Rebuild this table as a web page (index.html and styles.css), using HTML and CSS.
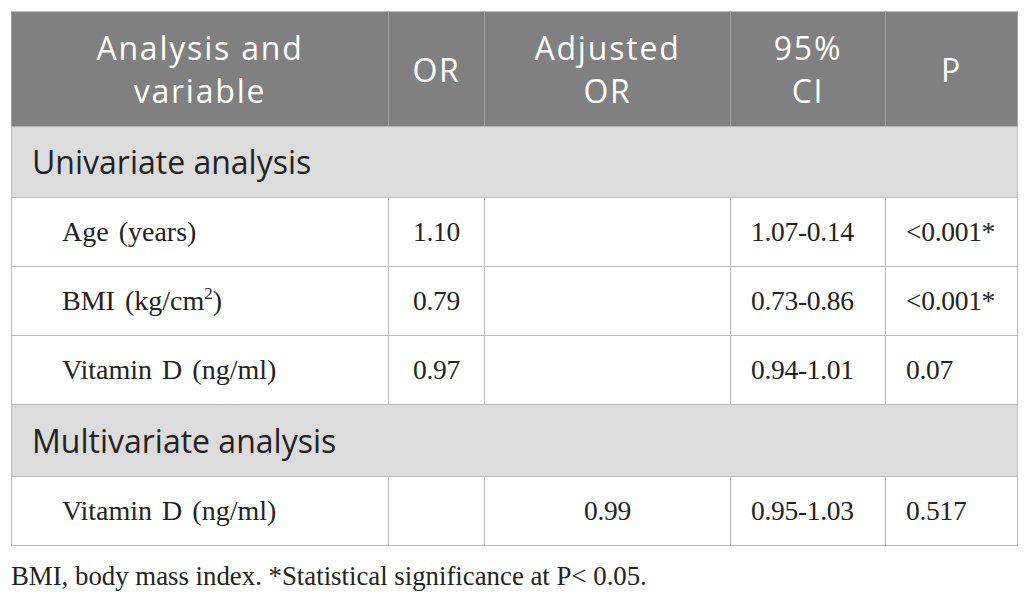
FILE: index.html
```html
<!DOCTYPE html>
<html>
<head>
<meta charset="utf-8">
<link rel="stylesheet" href="styles.css">
</head>
<body>
<div class="page">
  <table class="stats">
    <colgroup>
      <col class="c-var">
      <col class="c-or">
      <col class="c-adj">
      <col class="c-ci">
      <col class="c-p">
    </colgroup>
    <thead>
      <tr class="head">
        <th>Analysis and<br>variable</th>
        <th>OR</th>
        <th>Adjusted<br>OR</th>
        <th>95%<br>CI</th>
        <th>P</th>
      </tr>
    </thead>
    <tbody>
      <tr class="section"><td colspan="5">Univariate analysis</td></tr>
      <tr class="row">
        <td class="var">Age (years)</td>
        <td class="num center">1.10</td>
        <td class="num center"></td>
        <td class="num left">1.07-0.14</td>
        <td class="num left">&lt;0.001*</td>
      </tr>
      <tr class="row">
        <td class="var">BMI (kg/cm<sup>2</sup>)</td>
        <td class="num center">0.79</td>
        <td class="num center"></td>
        <td class="num left">0.73-0.86</td>
        <td class="num left">&lt;0.001*</td>
      </tr>
      <tr class="row">
        <td class="var">Vitamin D (ng/ml)</td>
        <td class="num center">0.97</td>
        <td class="num center"></td>
        <td class="num left">0.94-1.01</td>
        <td class="num left">0.07</td>
      </tr>
      <tr class="section section-2"><td colspan="5">Multivariate analysis</td></tr>
      <tr class="row">
        <td class="var">Vitamin D (ng/ml)</td>
        <td class="num center"></td>
        <td class="num center">0.99</td>
        <td class="num left">0.95-1.03</td>
        <td class="num left">0.517</td>
      </tr>
    </tbody>
  </table>
  <p class="note">BMI, body mass index. *Statistical significance at P&lt; 0.05.</p>
</div>
</body>
</html>
```

FILE: styles.css
```css
html, body {
  margin: 0;
  padding: 0;
  background: #ffffff;
}

.page {
  padding: 11px 0 0 11px;
}

.stats {
  border-collapse: collapse;
  table-layout: fixed;
  width: 1006px;
  border: 1px solid #bcbcbc;
}

.c-var { width: 377px; }
.c-or { width: 96px; }
.c-adj { width: 246px; }
.c-ci { width: 155px; }
.c-p { width: 132px; }

.head th {
  background: #808080;
  color: #ffffff;
  font-family: "Open Sans", "DejaVu Sans", sans-serif;
  font-weight: 400;
  font-size: 32px;
  letter-spacing: 1.8px;
  line-height: 43px;
  height: 114px;
  padding: 0;
  text-align: center;
  vertical-align: middle;
  border-left: 1px solid #a3a3a3;
  border-right: 1px solid #a3a3a3;
  border-bottom: 1px solid #b5b5b5;
}

.section td {
  background: #dcdcdc;
  color: #222222;
  font-family: "Open Sans", "DejaVu Sans", sans-serif;
  font-size: 32px;
  line-height: 40px;
  height: 70px;
  padding: 0 0 0 20px;
  vertical-align: middle;
  border-top: 1px solid #bcbcbc;
  border-bottom: 1px solid #bcbcbc;
}

.section-2 td {
  height: 71px;
}

.row td {
  font-family: "Liberation Serif", "Times New Roman", serif;
  font-size: 28px;
  color: #232323;
  height: 68px;
  padding: 0;
  vertical-align: middle;
  border: 1px solid #bcbcbc;
  white-space: nowrap;
}

.row td.var {
  padding-left: 50px;
  word-spacing: 3px;
}

.row td.num {
  font-size: 27.5px;
  letter-spacing: -0.3px;
}

.row td.center {
  text-align: center;
}

.row td.left {
  text-align: left;
  padding-left: 20px;
}

sup {
  font-size: 17px;
  line-height: 0;
  vertical-align: 11px;
}

.note {
  margin: 14px 0 0 0;
  font-family: "Liberation Serif", "Times New Roman", serif;
  font-size: 26.8px;
  line-height: 32px;
  color: #232323;
}
```
